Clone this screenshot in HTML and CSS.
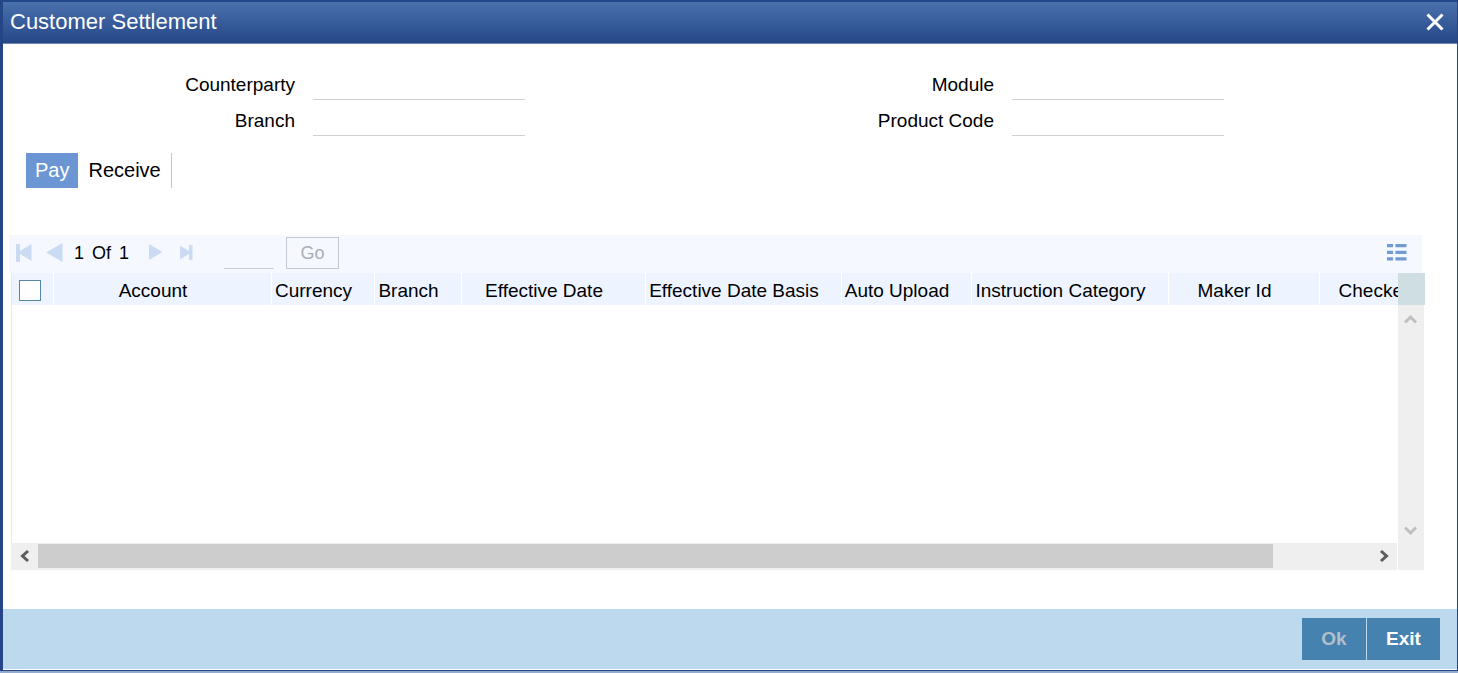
FILE: index.html
```html
<!DOCTYPE html>
<html lang="en">
<head>
<meta charset="utf-8">
<title>Customer Settlement</title>
<link rel="stylesheet" href="styles.css">
</head>
<body>
<div class="window">
  <header class="titlebar">
    <h1 class="title">Customer Settlement</h1>
    <button class="close" type="button" aria-label="Close">
      <svg width="18" height="18" viewBox="0 0 18 18"><path d="M1.500 1.500L16.500 16.500M16.500 1.500L1.500 16.500" stroke="#fff" stroke-width="3" fill="none"/></svg>
    </button>
  </header>

  <main class="content">
    <form class="fields">
      <div class="field"><label for="counterparty">Counterparty</label><input id="counterparty" type="text"></div>
      <div class="field"><label for="module">Module</label><input id="module" type="text"></div>
      <div class="field"><label for="branch">Branch</label><input id="branch" type="text"></div>
      <div class="field"><label for="product">Product Code</label><input id="product" type="text"></div>
    </form>

    <nav class="tabs">
      <a class="tab active" href="#pay">Pay</a>
      <a class="tab" href="#receive">Receive</a>
    </nav>

    <section class="grid">
      <div class="toolbar">
        <button class="pager" type="button" aria-label="First page"><svg width="16" height="19" viewBox="0 0 16 19"><path d="M0 0H4V7L15.500 0V17L4 10V18H0Z" fill="#cadbf3"/></svg></button>
        <button class="pager prev" type="button" aria-label="Previous page"><svg width="17" height="21" viewBox="0 0 17 21"><path d="M0 9.500L16.500 0V19Z" fill="#cadbf3"/></svg></button>
        <span class="page-info"><span>1</span><span>Of</span><span>1</span></span>
        <button class="pager next" type="button" aria-label="Next page"><svg width="14" height="18" viewBox="0 0 14 18"><path d="M0 0L13.500 8L0 16Z" fill="#cadbf3"/></svg></button>
        <button class="pager last" type="button" aria-label="Last page"><svg width="13" height="17" viewBox="0 0 13 17"><path d="M0 0.500L9 6V0H12.500V15H9V9L0 14.500Z" fill="#cadbf3"/></svg></button>
        <input class="page-input" type="text" aria-label="Page number">
        <button class="go" type="button" disabled>Go</button>
        <button class="pager list" type="button" aria-label="Single record view"><svg width="20" height="19" viewBox="0 0 20 19"><path d="M0 0H6V3.300H0ZM8.500 0H19.500V3.300H8.500ZM0 6.700H6V10H0ZM8.500 6.700H19.500V10H8.500ZM0 13.300H6V16.500H0ZM8.500 13.300H19.500V16.500H8.500Z" fill="#7199d4"/></svg></button>
      </div>
      <div class="scroll-area">
        <div class="table-view">
          <table class="records">
            <colgroup><col class="w-check"><col class="w-account"><col class="w-currency"><col class="w-branch"><col class="w-date"><col class="w-basis"><col class="w-upload"><col class="w-category"><col class="w-maker"><col class="w-checker"></colgroup>
            <thead>
              <tr>
                <th class="check-cell"><input class="check" type="checkbox" aria-label="Select all"></th>
                <th>Account</th><th>Currency</th><th>Branch</th><th>Effective Date</th><th>Effective Date Basis</th><th>Auto Upload</th><th>Instruction Category</th><th>Maker Id</th><th>Checker Id</th>
              </tr>
            </thead>
            <tbody></tbody>
          </table>
        </div>
        <div class="vbar">
          <div class="corner"></div>
          <div class="vtrack">
            <button class="arrow" type="button" aria-label="Scroll up"><svg width="14" height="10" viewBox="0 0 14 10"><path d="M1 8.500L6.500 3L12 8.500" stroke="#bfbfbf" stroke-width="3" fill="none"/></svg></button>
            <button class="arrow down" type="button" aria-label="Scroll down"><svg width="14" height="10" viewBox="0 0 14 10"><path d="M1 1.500L6.500 7L12 1.500" stroke="#bfbfbf" stroke-width="3" fill="none"/></svg></button>
          </div>
        </div>
        <div class="hbar">
          <button class="arrow" type="button" aria-label="Scroll left"><svg width="12" height="14" viewBox="0 0 12 14"><path d="M9 2L3.500 7L9 12" stroke="#5c5c5c" stroke-width="3" fill="none"/></svg></button>
          <div class="htrack"><div class="thumb"></div></div>
          <button class="arrow" type="button" aria-label="Scroll right"><svg width="12" height="14" viewBox="0 0 12 14"><path d="M3 2L8.500 7L3 12" stroke="#5c5c5c" stroke-width="3" fill="none"/></svg></button>
        </div>
      </div>
    </section>
  </main>

  <footer class="footer">
    <button class="action" type="button" disabled>Ok</button>
    <button class="action exit" type="button">Exit</button>
  </footer>
</div>
</body>
</html>
```

FILE: styles.css
```css
* { box-sizing: border-box; }
body {
  margin: 0;
  padding-bottom: 2px;
  min-height: 100vh;
  display: flex;
  background: #93abd0;
  font-family: "Liberation Sans", Arial, sans-serif;
  font-size: 19px;
  line-height: 22px;
  color: #000;
}
button, input { margin: 0; padding: 0; border: 0; font: inherit; background: none; }
svg { display: block; }

.window {
  flex: 1;
  min-width: 0;
  display: flex;
  flex-direction: column;
  background: #fff;
  border: 1px solid #24457f;
  border-left: 3px solid #244687;
  border-top: 2px solid #24468a;
}
.titlebar {
  display: flex;
  align-items: center;
  justify-content: space-between;
  height: 42px;
  padding: 0 13px 2px 7px;
  background: linear-gradient(#4a71ac, #254788);
  border-bottom: 1px solid #6f86b0;
}
.title { margin: 0; font-size: 22px; line-height: 26px; font-weight: normal; color: #fff; }

.content { flex: 1; display: flex; flex-direction: column; padding-bottom: 39px; }
.fields {
  display: grid;
  grid-template-columns: 1fr 1fr;
  padding: 20px 34px 0 22px;
}
.field { display: flex; height: 36px; gap: 18px; }
.field label { width: 270px; padding-top: 10px; text-align: right; }
.field input { width: 212px; border-bottom: 1px solid #cfd1d3; }

.tabs { display: flex; margin: 17px 0 47px 23px; font-size: 20px; }
.tab {
  display: flex;
  align-items: center;
  height: 35px;
  padding: 0 10px 2px;
  color: #000;
  text-decoration: none;
  border-right: 1px solid #c4c4c4;
}
.tab.active { padding: 0 9px 2px; background: #6b96d3; color: #fff; border-right: 0; }

.grid { flex: 1; display: flex; flex-direction: column; margin: 0 32px 0 6px; }
.toolbar {
  display: flex;
  align-items: center;
  height: 38px;
  margin-right: 3px;
  padding: 0 15px 2px 7px;
  background: #f5f9ff;
  font-size: 18px;
}
.prev { margin-left: 14px; }
.page-info { display: flex; gap: 8px; margin-left: 11px; }
.next { margin-left: 20px; }
.last { margin-left: 17px; }
.page-input { width: 50px; height: 32px; margin-left: 31px; border-bottom: 1px solid #ccd0d6; }
.go { width: 53px; height: 32px; margin-left: 12px; border: 1px solid #c3c8d1; color: #aaaeb4; }
.list { margin-left: auto; }

.scroll-area {
  flex: 1;
  display: grid;
  grid-template-columns: minmax(0, 1fr) 27px;
  grid-template-rows: 1fr 27px;
  margin-left: 2px;
}
.table-view { overflow: hidden; border-left: 1px solid #e9e9ee; }
.records { width: 1456px; table-layout: fixed; border-collapse: collapse; }
.records th {
  height: 32px;
  padding: 3px 18px 0 0;
  font-weight: normal;
  white-space: nowrap;
  background: #edf4ff;
  border-right: 1px solid #fff;
}
.records .check-cell { padding: 0 7px; text-align: left; }
.check {
  display: block;
  appearance: none;
  width: 22px;
  height: 21px;
  margin-top: 2px;
  background: #fff;
  border: 1px solid #5587a8;
}
.w-check { width: 41px; }
.w-account { width: 218px; }
.w-currency { width: 103px; }
.w-branch { width: 87px; }
.w-date { width: 184px; }
.w-basis { width: 196px; }
.w-upload { width: 130px; }
.w-category { width: 197px; }
.w-maker { width: 151px; }
.w-checker { width: 149px; }

.vbar { grid-row: 1 / 3; grid-column: 2; display: flex; flex-direction: column; }
.corner { height: 32px; background: #cfdee0; }
.vtrack {
  flex: 1;
  display: flex;
  flex-direction: column;
  justify-content: space-between;
  align-items: center;
  margin-right: 1px;
  padding: 9px 0 34px;
  background: #efefef;
}
.hbar {
  grid-row: 2;
  grid-column: 1;
  display: flex;
  margin-right: 1px;
  padding-bottom: 2px;
  background: #efefef;
}
.hbar .arrow { width: 27px; display: flex; align-items: center; justify-content: center; }
.htrack { flex: 1; padding-top: 1px; }
.thumb { width: calc(100% - 97px); height: 100%; background: #cdcdcd; }

.footer {
  display: flex;
  justify-content: flex-end;
  gap: 1px;
  height: 61px;
  padding: 9px 17px;
  background: #bdd9ed;
  border-bottom: 1px solid #fff;
}
.action {
  width: 64px;
  height: 42px;
  background: #4682af;
  color: #fff;
  font-weight: bold;
}
.action:disabled { color: #b3bfca; }
.exit { width: 73px; }
```
